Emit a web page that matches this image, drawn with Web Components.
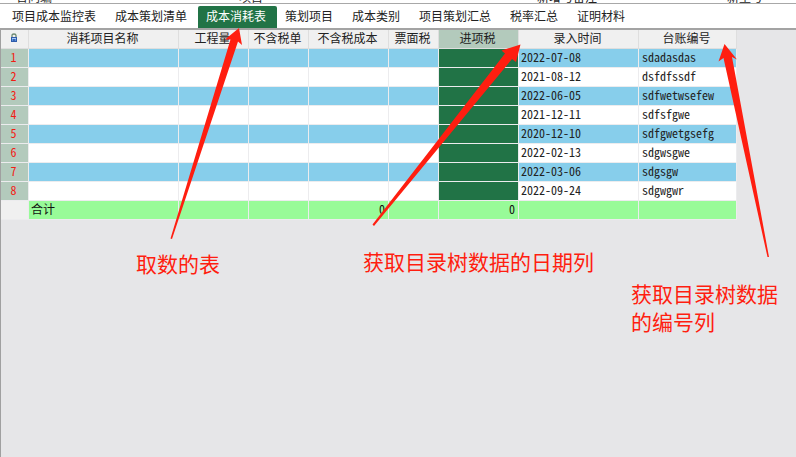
<!DOCTYPE html>
<html lang="zh-CN">
<head>
    <meta charset="utf-8">
    <title>成本消耗表</title>
    <style>
        body {
            margin: 0;
            overflow: hidden;
            background: #e6e6e8;
            color: #222;
            font: 12px/18px "Noto Sans CJK SC", sans-serif;
        }
    </style>
</head>
<body>
    <sheet-page>
        <form-strip slot="strip"></form-strip>
        <sheet-tabs slot="tabs" active="2"></sheet-tabs>
        <cost-grid></cost-grid>
        <note-layer slot="notes">
            <note-text style="left: 136px; top: 249px">取数的表</note-text>
            <note-text style="left: 363px; top: 247px">获取目录树数据的日期列</note-text>
            <note-text style="left: 631px; top: 279px">获取目录树数据<br>的编号列</note-text>
        </note-layer>
    </sheet-page>

    <script>
        function render(el, html) {
            el.attachShadow({mode: 'open'}).innerHTML = html;
            return el.shadowRoot;
        }

        class SheetPage extends HTMLElement {
            constructor() {
                super();
                render(this, `
                    <style>
                        :host { display: flex; flex-direction: column; position: relative; min-height: 100vh; }
                        main { flex: 1; border-left: 1px solid #a0a0a0; }
                    </style>
                    <slot name="strip"></slot>
                    <slot name="tabs"></slot>
                    <main><slot></slot></main>
                    <slot name="notes"></slot>`);
            }
        }

        // bottom edge of the form above the sheet, scrolled almost out of view
        class FormStrip extends HTMLElement {
            constructor() {
                super();
                render(this, `
                    <style>
                        :host {
                            display: grid;
                            grid-template-columns: 223px 298px 190px 1fr;
                            align-content: end;
                            height: 3px;
                            padding-left: 16px;
                            overflow: hidden;
                            background: #fff;
                            border-bottom: 1px solid #a8a8a8;
                        }
                        span { line-height: 12px; }
                    </style>
                    <span>合同编</span><span>项目</span><span>新增与备注</span><span>新型号</span>`);
            }
        }

        class SheetTabs extends HTMLElement {
            connectedCallback() {
                const names = ['项目成本监控表', '成本策划清单', '成本消耗表', '策划项目',
                    '成本类别', '项目策划汇总', '税率汇总', '证明材料'];
                const active = Number(this.getAttribute('active'));
                render(this, `
                    <style>
                        :host { display: block; background: #fff; border-bottom: 2px solid #a3a3a3; }
                        nav { display: flex; padding: 2px 0 0 4px; }
                        button {
                            height: 22px;
                            padding: 0 11px 2px 8px;
                            border: 0;
                            border-radius: 2px 2px 0 0;
                            background: none;
                            color: inherit;
                            font: inherit;
                            line-height: 18px;
                            white-space: nowrap;
                        }
                        button[aria-selected=true] { background: #217346; color: #fff; }
                    </style>
                    <nav role="tablist">
                        ${names.map((n, i) => `<button role="tab" aria-selected="${i === active}">${n}</button>`).join('')}
                    </nav>`);
            }
        }

        class LockIcon extends HTMLElement {
            constructor() {
                super();
                render(this, `
                    <style>
                        :host { display: block; height: 10px; }
                        svg { display: block; margin: 0 auto; }
                    </style>
                    <svg width="8" height="10" viewBox="0 0 8 10">
                        <path d="M2 5V2.5Q2 1 4 1T6 2.5V5" fill="none" stroke="#6d8a72" stroke-width="1.3"/>
                        <rect x="1.5" y="4.5" width="5" height="4" fill="#5b93e0" stroke="#2f5cab"/>
                        <path d="M2 5.500h4" stroke="#a9cbf5"/>
                        <path d="M4 6v2" stroke="#1c3d85"/>
                    </svg>`);
            }
        }

        class CostGrid extends HTMLElement {
            connectedCallback() {
                const cols = [
                    ['消耗项目名称', 150], ['工程量', 70], ['不含税单', 60], ['不含税成本', 80],
                    ['票面税', 50], ['进项税', 80], ['录入时间', 120], ['台账编号', 98]
                ];
                const rows = [
                    ['2022-07-08', 'sdadasdas'],
                    ['2021-08-12', 'dsfdfssdf'],
                    ['2022-06-05', 'sdfwetwsefew'],
                    ['2021-12-11', 'sdfsfgwe'],
                    ['2020-12-10', 'sdfgwetgsefg'],
                    ['2022-02-13', 'sdgwsgwe'],
                    ['2022-03-06', 'sdgsgw'],
                    ['2022-09-24', 'sdgwgwr']
                ];
                render(this, `
                    <style>
                        :host { display: block; }
                        table { table-layout: fixed; width: 736px; border-collapse: separate; border-spacing: 0; }
                        th, td {
                            box-sizing: border-box;
                            height: 19px;
                            padding: 0 3px 2px 2px;
                            border: solid #ececee;
                            border-width: 0 1px 1px 0;
                            font-weight: normal;
                            line-height: 16px;
                            white-space: nowrap;
                        }
                        thead th { background: #f0f0f0; border-color: #dedede; padding: 0 2px 2px 0; }
                        tbody th { background: #b3cabc; color: #f21c14; padding: 0 2px 2px 0; }
                        tbody td { background: #fff; }
                        tbody tr:nth-child(odd) td { background: #87ceeb; }
                        thead th.picked { background: #b3cabc; }
                        tbody tr td.picked { background: #217346; }
                        tbody th, .data, .num { font-feature-settings: "hwid"; }
                        .code { padding-left: 3px; }
                        tfoot th { background: #f0f0f0; }
                        tfoot td { background: #98fb98; color: #111; }
                        .num { text-align: right; }
                    </style>
                    <table>
                        <colgroup><col style="width: 28px">${cols.map(c => `<col style="width: ${c[1]}px">`).join('')}</colgroup>
                        <thead><tr>
                            <th><lock-icon></lock-icon></th>
                            ${cols.map((c, i) => `<th${i === 5 ? ' class="picked"' : ''}>${c[0]}</th>`).join('')}
                        </tr></thead>
                        <tbody>
                            ${rows.map((r, i) => `<tr><th>${i + 1}</th><td></td><td></td><td></td><td></td><td></td>
                                <td class="picked"></td><td class="data">${r[0]}</td><td class="data code">${r[1]}</td></tr>`).join('')}
                        </tbody>
                        <tfoot><tr>
                            <th></th><td>合计</td><td></td><td></td><td class="num">0</td>
                            <td></td><td class="num">0</td><td></td><td></td>
                        </tr></tfoot>
                    </table>`);
            }
        }

        // arrows and captions drawn over the sheet
        class NoteLayer extends HTMLElement {
            constructor() {
                super();
                render(this, `
                    <style>
                        :host { position: absolute; inset: 0; pointer-events: none; }
                        svg { display: block; width: 100%; height: 100%; overflow: visible; }
                    </style>
                    <svg fill="#ff1e10" aria-hidden="true">
                        <path d="M239 28L225 39.5L230.5 39.5L170.5 238.5L172 239L238 41.5L242 45Z"/>
                        <path d="M520.5 44.5L501.5 50.5L505 53.5L372.5 224.5L374 226L512 59L516 62Z"/>
                        <path d="M724.5 44L718.5 61.5L723.5 58L767.5 257H769L732 57L737 59.5Z"/>
                    </svg>
                    <slot></slot>`);
            }
        }

        class NoteText extends HTMLElement {
            constructor() {
                super();
                render(this, `
                    <style>
                        :host {
                            position: absolute;
                            color: #ff1e10;
                            font-size: 21px;
                            line-height: 28px;
                            white-space: nowrap;
                        }
                    </style>
                    <slot></slot>`);
            }
        }

        customElements.define('sheet-page', SheetPage);
        customElements.define('form-strip', FormStrip);
        customElements.define('sheet-tabs', SheetTabs);
        customElements.define('lock-icon', LockIcon);
        customElements.define('cost-grid', CostGrid);
        customElements.define('note-layer', NoteLayer);
        customElements.define('note-text', NoteText);
    </script>
</body>
</html>
